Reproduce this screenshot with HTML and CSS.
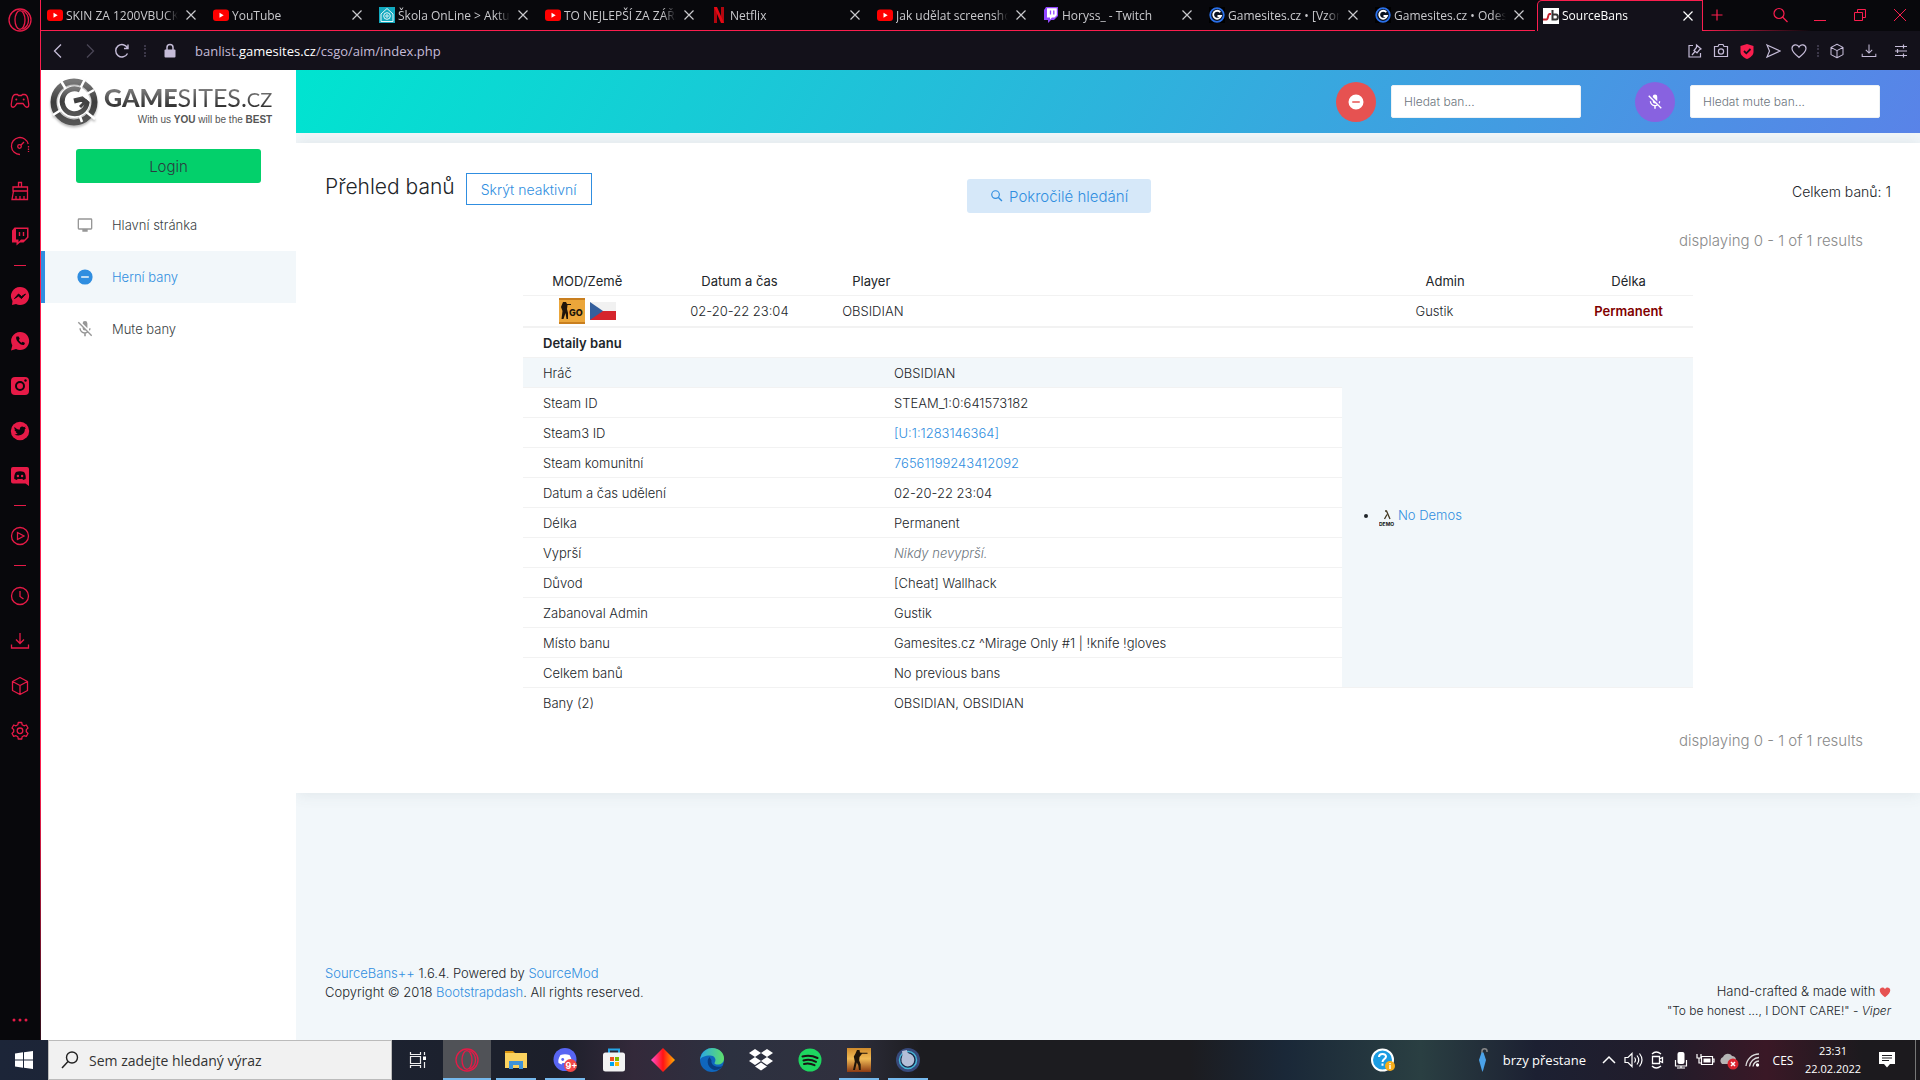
FILE: index.html
```html
<!DOCTYPE html>
<html lang="cs">
<head>
<meta charset="utf-8">
<title>SourceBans</title>
<link rel="stylesheet" href="styles.css">
</head>
<body>
<svg class="defs" aria-hidden="true">
  <defs>
    <linearGradient id="steel" x1="0" y1="0" x2="0" y2="1"><stop offset="0" stop-color="#777"/><stop offset=".5" stop-color="#3c3c3c"/><stop offset="1" stop-color="#555"/></linearGradient>
    <linearGradient id="edge1" x1="0" y1="0" x2="1" y2="0"><stop offset="0" stop-color="#2aa7e4"/><stop offset="1" stop-color="#5fe06a"/></linearGradient>
    <linearGradient id="diamond" x1="0" y1="0" x2="1" y2="0"><stop offset="0" stop-color="#ff4fd0"/><stop offset=".5" stop-color="#ff1414"/><stop offset="1" stop-color="#ffb000"/></linearGradient>
    <linearGradient id="gold" x1="0" y1="0" x2="0" y2="1"><stop offset="0" stop-color="#d08a2c"/><stop offset=".45" stop-color="#f1bb55"/><stop offset="1" stop-color="#8c3a12"/></linearGradient>
    <symbol id="i-x" viewBox="0 0 10 10"><path d="M.5.5l9 9M9.500.5l-9 9" fill="none" stroke="currentColor" stroke-width="1.200"/></symbol>
    <symbol id="i-yt" viewBox="0 0 16 16"><rect y="2.500" width="16" height="11.500" rx="3" fill="#f00"/><path d="M6.500 5.700v5l4.200-2.500z" fill="#fff"/></symbol>
    <symbol id="i-gs" viewBox="0 0 16 16"><rect width="16" height="16" fill="#000"/><circle cx="8" cy="8" r="6.800" fill="#0a1220" stroke="#2a6fe8" stroke-width="1.800"/><path d="M11.300 5.200A4 4 0 1 0 12 9H8.500" fill="none" stroke="#fff" stroke-width="1.800"/></symbol>
    <symbol id="i-opera" viewBox="0 0 24 24"><g fill="none" stroke="currentColor" stroke-width="1.300"><circle cx="12" cy="12" r="11"/><ellipse cx="12" cy="12" rx="5" ry="9.300"/><path d="M14.500 2.500c8 4 8 15 0 19"/></g></symbol>
    <symbol id="i-cube" viewBox="0 0 20 20"><path d="M10 1.500l7.500 4v9l-7.500 4-7.500-4v-9zM2.500 5.500l7.500 4 7.500-4M10 9.500v9" fill="none" stroke="currentColor" stroke-width="1.300" stroke-linejoin="round"/></symbol>
    <symbol id="i-dl" viewBox="0 0 20 20"><path d="M10 2v10M6 8.500l4 4 4-4M1.500 13.500v3.500h17v-3.500" fill="none" stroke="currentColor" stroke-width="1.300"/></symbol>
    <symbol id="i-minus" viewBox="0 0 24 24"><path fill="currentColor" d="M12 2a10 10 0 1 0 0 20 10 10 0 0 0 0-20zm5 11H7v-2h10z"/></symbol>
    <symbol id="i-micoff" viewBox="0 0 24 24"><path fill="currentColor" d="M19 11c0 1.190-.34 2.300-.9 3.280l-1.230-1.230c.27-.62.43-1.310.43-2.050H19m-4 .16L9 5.180V5a3 3 0 0 1 3-3 3 3 0 0 1 3 3v6.160M4.270 3L21 19.730 19.730 21l-4.190-4.190c-.77.46-1.630.77-2.540.91V21h-2v-3.280c-3.280-.49-6-3.310-6-6.720h1.700c0 3 2.540 5.100 5.300 5.100.81 0 1.600-.19 2.310-.52l-1.660-1.660L12 14a3 3 0 0 1-3-3v-.72L3 4.270 4.270 3z"/></symbol>
    <symbol id="i-search" viewBox="0 0 24 24"><circle cx="9.500" cy="9.500" r="6.500" fill="none" stroke="currentColor" stroke-width="2"/><path d="M14.500 14.500l6 6" stroke="currentColor" stroke-width="2.400"/></symbol>
  </defs>
</svg>

<div class="browser">
  <nav class="rail" aria-label="Opera">
    <button class="rail-btn rail-opera" aria-label="Menu"><svg class="ic24"><use href="#i-opera"/></svg></button>
    <button class="rail-btn" aria-label="GX Corner"><svg class="ic20" viewBox="0 0 20 20"><path d="M5.500 3.500h2l1 1h3l1-1h2c2 0 3 2 3.500 5l.8 5c.2 3-2.300 3.500-3.800 1.700L13 12.500H7L5 15.200C3.500 17 1 16.500 1.200 13.500l.8-5c.5-3 1.500-5 3.500-5z" fill="none" stroke="currentColor" stroke-width="1.300"/><circle cx="6.300" cy="8.500" r="1" fill="currentColor"/><circle cx="13.700" cy="8.500" r="1" fill="currentColor"/></svg></button>
    <button class="rail-btn" aria-label="GX Control"><svg class="ic20" viewBox="0 0 20 20"><g fill="none" stroke="currentColor" stroke-width="1.300"><path d="M10 18.500A8.500 8.500 0 1 1 18.200 8"/><circle cx="9.500" cy="10.500" r="1.800"/><path d="M10.800 9.200L14 6"/><path d="M18.500 10v6" stroke-dasharray="1.500 1"/></g></svg></button>
    <button class="rail-btn" aria-label="GX Cleaner"><svg class="ic20" viewBox="0 0 20 20"><path d="M8.500 6V1.500h3V6M3 6h14.500v4H3zM3.500 10L2 18.500h15.500V10M6 18v-3M10 18v-3M14 18v-3" fill="none" stroke="currentColor" stroke-width="1.300"/></svg></button>
    <button class="rail-btn" aria-label="Twitch"><svg class="ic20" viewBox="0 0 20 20"><path d="M2 4.500L4.500 1.500H18.500v10l-5 5H10L6.500 19.500v-3H2z" fill="currentColor"/><path d="M6 3h11v8l-2.500 2.500H11L8.500 16v-2.500H6z" fill="#08080c"/><path d="M9.500 6v4M13.500 6v4" stroke="currentColor" stroke-width="1.400"/></svg></button>
    <hr>
    <button class="rail-btn" aria-label="Messenger"><svg class="ic20" viewBox="0 0 20 20"><path d="M10 1a9 9 0 1 1-4 17l-4 1 .5-4A9 9 0 0 1 10 1z" fill="currentColor"/><path d="M4.500 12.500l4-4.500 3 2.500 4-2.500-4 4.500-3-2.500z" fill="#08080c" stroke="#08080c"/></svg></button>
    <button class="rail-btn" aria-label="WhatsApp"><svg class="ic20" viewBox="0 0 20 20"><path d="M10 1a9 9 0 1 1-4 17l-5 1.500 1.300-5A9 9 0 0 1 10 1z" fill="currentColor"/><path d="M6.500 5.500c-2 3 4 9.500 7.500 8.500l1-2-2.300-1.300-1.200 1c-1-.3-2.300-1.700-2.700-2.700l.9-1.200-1-2.300z" fill="#08080c"/></svg></button>
    <button class="rail-btn" aria-label="Instagram"><svg class="ic20" viewBox="0 0 20 20"><rect x="1" y="1" width="18" height="18" rx="4" fill="currentColor"/><circle cx="10" cy="10" r="4" fill="none" stroke="#08080c" stroke-width="2"/><circle cx="15.500" cy="4.500" r="1.200" fill="#08080c"/></svg></button>
    <button class="rail-btn" aria-label="Twitter"><svg class="ic20" viewBox="0 0 20 20"><circle cx="10" cy="10" r="9.200" fill="currentColor"/><path d="M4.500 6c1.500 1.700 3.300 2.500 5.400 2.600-.5-3 2.600-4 4.100-2.400l1.700-.6-.9 1.500 1.200-.2-1.200 1.300c.2 5.500-6 7.700-10.300 5.200 1.300 0 2.400-.3 3.200-1-1.200-.2-1.800-.8-2.100-1.600h1C5 10.300 4.500 9.500 4.500 8.500l1 .2C4.300 7.800 4.100 7 4.500 6z" fill="#08080c"/></svg></button>
    <button class="rail-btn" aria-label="Discord"><svg class="ic20" viewBox="0 0 20 20"><path d="M3 1h14a2 2 0 0 1 2 2v17l-3.500-2.500H3a2 2 0 0 1-2-2V3a2 2 0 0 1 2-2z" fill="currentColor"/><path d="M6 6c2.500-1 5.500-1 8 0 1.500 2 2 4.500 1.700 7l-2.500 1-1-1.300c-1.500.3-3 .3-4.400 0L6.800 14l-2.500-1C4 10.500 4.500 8 6 6z" fill="#08080c"/><circle cx="7.900" cy="10" r="1.200" fill="currentColor"/><circle cx="12.100" cy="10" r="1.200" fill="currentColor"/></svg></button>
    <hr>
    <button class="rail-btn" aria-label="Player"><svg class="ic20" viewBox="0 0 20 20"><circle cx="10" cy="10" r="8.500" fill="none" stroke="currentColor" stroke-width="1.300"/><path d="M7.500 6.500v7l6.500-3.500z" fill="none" stroke="currentColor" stroke-width="1.300"/></svg></button>
    <hr>
    <button class="rail-btn" aria-label="Historie"><svg class="ic20" viewBox="0 0 20 20"><circle cx="10" cy="10" r="8.500" fill="none" stroke="currentColor" stroke-width="1.300"/><path d="M10 5v5.500l3.500 2.500" fill="none" stroke="currentColor" stroke-width="1.300"/></svg></button>
    <button class="rail-btn" aria-label="Stahování"><svg class="ic20"><use href="#i-dl"/></svg></button>
    <button class="rail-btn" aria-label="Rozšíření"><svg class="ic20"><use href="#i-cube"/></svg></button>
    <button class="rail-btn" aria-label="Nastavení"><svg class="ic20" viewBox="0 0 20 20"><path d="M8.300 1.500h3.400l.5 2.300 1.800 1 2.300-.8 1.700 3-1.700 1.600v2.200l1.700 1.700-1.700 2.900-2.300-.7-1.800 1-.5 2.300H8.300l-.5-2.300-1.800-1-2.300.7L2 12.500l1.700-1.700V8.600L2 7l1.700-3 2.300.8 1.800-1z" fill="none" stroke="currentColor" stroke-width="1.300" stroke-linejoin="round"/><circle cx="10" cy="9.800" r="2.800" fill="none" stroke="currentColor" stroke-width="1.300"/></svg></button>
    <button class="rail-btn rail-more" aria-label="Více"><svg class="ic20" viewBox="0 0 20 20"><g fill="currentColor"><circle cx="4" cy="10" r="1.500"/><circle cx="10" cy="10" r="1.500"/><circle cx="16" cy="10" r="1.500"/></g></svg></button>
  </nav>

  <div class="window">
    <div class="tabs">
      <div class="tab"><svg class="ic16"><use href="#i-yt"/></svg><span>SKIN ZA 1200VBUCKS</span><button aria-label="Zavřít"><svg><use href="#i-x"/></svg></button></div>
      <div class="tab"><svg class="ic16"><use href="#i-yt"/></svg><span>YouTube</span><button aria-label="Zavřít"><svg><use href="#i-x"/></svg></button></div>
      <div class="tab"><svg class="ic16" viewBox="0 0 16 16"><rect width="16" height="16" fill="#12a9bf"/><path d="M2 7l6-5.500L14 7v7.500H2z" fill="none" stroke="#e8f8fa"/><circle cx="8" cy="9" r="3.300" fill="none" stroke="#e8f8fa"/><circle cx="8" cy="9" r="1.200" fill="none" stroke="#e8f8fa"/></svg><span>Škola OnLine &gt; Aktua</span><button aria-label="Zavřít"><svg><use href="#i-x"/></svg></button></div>
      <div class="tab"><svg class="ic16"><use href="#i-yt"/></svg><span>TO NEJLEPŠÍ ZA ZÁŘÍ</span><button aria-label="Zavřít"><svg><use href="#i-x"/></svg></button></div>
      <div class="tab"><svg class="ic16" viewBox="0 0 16 16"><path d="M3 0h3v16H3zM10 0h3v16h-3z" fill="#b1060f"/><path d="M3 0h3l7 16h-3z" fill="#e50914"/></svg><span>Netflix</span><button aria-label="Zavřít"><svg><use href="#i-x"/></svg></button></div>
      <div class="tab"><svg class="ic16"><use href="#i-yt"/></svg><span>Jak udělat screenshot</span><button aria-label="Zavřít"><svg><use href="#i-x"/></svg></button></div>
      <div class="tab"><svg class="ic16" viewBox="0 0 16 16"><path d="M1 3l2-3h12v9l-4 4H8l-3 3v-3H1z" fill="#9146ff"/><path d="M4 1.200h9.800v7L11.500 10.500H9L7 12.500v-2H4z" fill="#fff"/><path d="M7.500 3.500v4M10.800 3.500v4" stroke="#9146ff" stroke-width="1.300"/></svg><span>Horyss_ - Twitch</span><button aria-label="Zavřít"><svg><use href="#i-x"/></svg></button></div>
      <div class="tab"><svg class="ic16"><use href="#i-gs"/></svg><span>Gamesites.cz • [Vzor]</span><button aria-label="Zavřít"><svg><use href="#i-x"/></svg></button></div>
      <div class="tab"><svg class="ic16"><use href="#i-gs"/></svg><span>Gamesites.cz • Odesla</span><button aria-label="Zavřít"><svg><use href="#i-x"/></svg></button></div>
      <div class="tab active"><svg class="ic16" viewBox="0 0 16 16"><rect width="16" height="16" fill="#fff"/><path d="M0 11.500h3.500c2 0 1-5 3-5.500H8" fill="none" stroke="#c8202c" stroke-width="2"/><path d="M9.500 2v9.500H13c2.500 0 2.500-5 0-5H9" fill="none" stroke="#333" stroke-width="2"/></svg><span>SourceBans</span><button aria-label="Zavřít"><svg><use href="#i-x"/></svg></button></div>
      <div class="tabs-rest">
        <button aria-label="Nová karta"><svg class="ic16" viewBox="0 0 16 16"><path d="M8 2.500v11M2.500 8h11" stroke="currentColor" stroke-width="1.200"/></svg></button>
        <div class="win-controls">
          <button aria-label="Hledat"><svg class="ic16" viewBox="0 0 16 16"><circle cx="7" cy="6.500" r="5" fill="none" stroke="currentColor" stroke-width="1.200"/><path d="M10.500 10l5 5" stroke="currentColor" stroke-width="1.200"/></svg></button>
          <button aria-label="Minimalizovat"><svg class="ic16" viewBox="0 0 16 16"><path d="M2 13.500h12" stroke="currentColor"/></svg></button>
          <button aria-label="Obnovit"><svg class="ic16" viewBox="0 0 16 16"><path d="M2.500 5.500h8v8h-8zM5.500 5.500v-3h8v8h-3" fill="none" stroke="currentColor"/></svg></button>
          <button aria-label="Zavřít okno"><svg class="ic16" viewBox="0 0 16 16"><path d="M2 2l12 12M14 2L2 14" stroke="currentColor"/></svg></button>
        </div>
      </div>
    </div>

    <div class="toolbar">
      <button aria-label="Zpět"><svg class="ic16" viewBox="0 0 16 16"><path d="M11 1.500L4.500 8l6.500 6.500" fill="none" stroke="currentColor" stroke-width="1.300"/></svg></button>
      <button class="off" aria-label="Vpřed"><svg class="ic16" viewBox="0 0 16 16"><path d="M5 1.500L11.500 8 5 14.500" fill="none" stroke="currentColor" stroke-width="1.300"/></svg></button>
      <button aria-label="Obnovit stránku"><svg class="ic16" viewBox="0 0 16 16"><path d="M13.500 10.500A6.200 6.200 0 1 1 13.500 5M14 1.500V5.500h-4" fill="none" stroke="currentColor" stroke-width="1.400"/></svg></button>
      <i class="dots"></i>
      <svg class="ic16 lock" viewBox="0 0 16 16"><rect x="2.500" y="6.500" width="11" height="8" rx="1" fill="currentColor"/><path d="M5 7V4.500a3 3 0 0 1 6 0V7" fill="none" stroke="currentColor" stroke-width="1.500"/></svg>
      <span class="url">banlist.<b>gamesites.cz</b>/csgo/aim/index.php</span>
      <div class="tools">
        <svg class="ic16" viewBox="0 0 16 16"><path d="M6 2.500H2v11.500h11.500V10M9.500 2l4.500 4-1.500.8-2.500 3L7 7.500l2.500-3zM8 8.500l-3 3.500" fill="none" stroke="currentColor" stroke-width="1.200"/></svg>
        <svg class="ic16" viewBox="0 0 16 16"><path d="M1.500 3.500h3.500l1-2h4l1 2h3.500v10h-13z" fill="none" stroke="currentColor" stroke-width="1.200"/><circle cx="8" cy="8.500" r="2.600" fill="none" stroke="currentColor" stroke-width="1.200"/></svg>
        <svg class="ic16 shield" viewBox="0 0 16 16"><path d="M8 1l6.500 2v6c0 3-3 5.500-6.500 7-3.500-1.500-6.500-4-6.500-7V3z" fill="currentColor"/><path d="M5 8l2.300 2.300L11.500 6" fill="none" stroke="#13111a" stroke-width="1.800"/></svg>
        <svg class="ic16" viewBox="0 0 16 16"><path d="M2 2l13 6-13 6 2.500-6z" fill="none" stroke="currentColor" stroke-width="1.200"/></svg>
        <svg class="ic16" viewBox="0 0 16 16"><path d="M8 14.500C3 10.500 1 8 1 5.500c0-4 5.500-5 7-1.500 1.500-3.500 7-2.500 7 1.500 0 2.500-2 5-7 9z" fill="none" stroke="currentColor" stroke-width="1.200"/></svg>
        <i class="dots"></i>
        <svg class="ic16"><use href="#i-cube"/></svg>
        <svg class="ic16 wide"><use href="#i-dl"/></svg>
        <svg class="ic16 wide" viewBox="0 0 16 16"><path d="M2 3.500h12M2 8h12M2 12.500h12M10.500 1.500v4M4.500 6v4M10.500 10.500v4" stroke="currentColor" stroke-width="1.200"/></svg>
      </div>
    </div>

    <div class="site">
      <aside class="sidebar">
        <a class="logo" href="#">
          <svg viewBox="0 0 50 50"><circle cx="25" cy="25" r="20.500" fill="none" stroke="url(#steel)" stroke-width="6"/><path d="M12 4l6 10M36 2l-6 12M4 38l11-7M36 34l10 8M33 45l-3-8M45 13l-9 5" stroke="#fff" stroke-width="2.500"/><circle cx="25" cy="25" r="16" fill="#fff"/><path d="M31 13A12.500 12.500 0 1 0 38 26l-5-4-8 2" fill="none" stroke="url(#steel)" stroke-width="5"/><path d="M31 30l7-7" stroke="#444" stroke-width="3"/></svg>
          <span class="logo-text"><span class="logo-name"><b>GAME</b>SITES.<small>CZ</small></span><span class="logo-tag">With us <b>YOU</b> will be the <b>BEST</b></span></span>
        </a>
        <button class="login">Login</button>
        <nav class="menu">
          <a href="#"><svg class="ic16" viewBox="0 0 24 24"><path fill="currentColor" d="M21 2H3a2 2 0 0 0-2 2v13a2 2 0 0 0 2 2h5v3h8v-3h5a2 2 0 0 0 2-2V4a2 2 0 0 0-2-2zm0 15H3V4h18z"/></svg>Hlavní stránka</a>
          <a href="#" class="current"><svg class="ic16" viewBox="1.500 1.500 21 21"><use href="#i-minus" width="24" height="24"/></svg>Herní bany</a>
          <a href="#"><svg class="ic16" viewBox="2 2 20 20"><use href="#i-micoff" width="24" height="24"/></svg>Mute bany</a>
        </nav>
      </aside>

      <div class="main">
        <header class="topbar">
          <form class="find"><button type="button" class="round red" aria-label="Hledat ban"><svg class="ic18"><use href="#i-minus"/></svg></button><input type="text" placeholder="Hledat ban..." aria-label="Hledat ban"></form>
          <form class="find"><button type="button" class="round violet" aria-label="Hledat mute ban"><svg class="ic18"><use href="#i-micoff"/></svg></button><input type="text" placeholder="Hledat mute ban..." aria-label="Hledat mute ban"></form>
        </header>

        <section class="card">
          <div class="card-head">
            <div class="card-title"><h1>Přehled banů</h1><button class="outline">Skrýt neaktivní</button></div>
            <button class="advanced"><svg class="ic14"><use href="#i-search"/></svg>Pokročilé hledání</button>
            <p class="total">Celkem banů: 1</p>
          </div>
          <p class="paging">displaying 0 - 1 of 1 results</p>
          <div class="tables">
            <table class="bans">
              <colgroup><col class="c-mod"><col class="c-date"><col class="c-player"><col class="c-admin"><col class="c-len"></colgroup>
              <thead><tr><th>MOD/Země</th><th>Datum a čas</th><th class="left">Player</th><th class="left">Admin</th><th>Délka</th></tr></thead>
              <tbody><tr>
                <td><span class="flags"><svg width="26" height="26" viewBox="0 0 26 26"><rect width="26" height="26" fill="#eba63a"/><path d="M0 0h26v2H0zM0 24h26v2H0z" fill="#c97f1f"/><path d="M4 4h3l1 2h4v1H8.500L8 11l1 4v6H7.500l-1-6-2 6H2.500l1-8-1.500-4z" fill="#20150a"/><text x="10" y="18" class="go">GO</text></svg><svg width="26" height="18" viewBox="0 0 26 18"><rect width="26" height="18" fill="#f1f1f1"/><path d="M0 9h26v9H0z" fill="#d5242c"/><path d="M0 0l13 9-13 9z" fill="#345f9c"/></svg></span></td>
                <td>02-20-22 23:04</td><td class="left">OBSIDIAN</td><td class="left">Gustik</td><td class="perm">Permanent</td>
              </tr></tbody>
            </table>
            <table class="details">
              <colgroup><col class="d-name"><col class="d-value"><col class="d-side"></colgroup>
              <tbody>
                <tr><th colspan="3">Detaily banu</th></tr>
                <tr class="tint"><td>Hráč</td><td>OBSIDIAN</td><td rowspan="11" class="side"><ul><li><svg width="16" height="16" viewBox="0 0 16 16"><path d="M6 1h1.500l3.500 8M8 4.500L5.500 9" fill="none" stroke="#443a22" stroke-width="1.300"/><text x="0" y="16" class="demo">DEMO</text></svg><a href="#">No Demos</a></li></ul></td></tr>
                <tr><td>Steam ID</td><td>STEAM_1:0:641573182</td></tr>
                <tr><td>Steam3 ID</td><td><a href="#">[U:1:1283146364]</a></td></tr>
                <tr><td>Steam komunitní</td><td><a href="#">76561199243412092</a></td></tr>
                <tr><td>Datum a čas udělení</td><td>02-20-22 23:04</td></tr>
                <tr><td>Délka</td><td>Permanent</td></tr>
                <tr><td>Vyprší</td><td><em>Nikdy nevyprší.</em></td></tr>
                <tr><td>Důvod</td><td>[Cheat] Wallhack</td></tr>
                <tr><td>Zabanoval Admin</td><td>Gustik</td></tr>
                <tr><td>Místo banu</td><td>Gamesites.cz ^Mirage Only #1 | !knife !gloves</td></tr>
                <tr><td>Celkem banů</td><td>No previous bans</td></tr>
                <tr><td>Bany (2)</td><td>OBSIDIAN, OBSIDIAN</td><td></td></tr>
              </tbody>
            </table>
          </div>
          <p class="paging">displaying 0 - 1 of 1 results</p>
        </section>

        <footer class="footer">
          <div><p><a href="#">SourceBans++</a> 1.6.4. Powered by <a href="#">SourceMod</a></p><p>Copyright © 2018 <a href="#">Bootstrapdash</a>. All rights reserved.</p></div>
          <div class="credits"><p>Hand-crafted &amp; made with <svg width="12" height="12" viewBox="0 0 16 16"><path d="M8 15C3 10.800 1 8.500 1 5.500c0-4 5.500-5 7-1.500 1.500-3.500 7-2.500 7 1.500 0 3-2 5.300-7 9.500z" fill="#e65251"/></svg></p><p class="quote">"To be honest ..., I DONT CARE!" - <i>Viper</i></p></div>
        </footer>
      </div>
    </div>
  </div>
</div>

<div class="taskbar">
  <button class="start" aria-label="Start"><svg width="18" height="18" viewBox="0 0 18 18"><path d="M0 2.500l8-1.200v7.200H0zM9 1.200L18 0v8.500H9zM0 9.500h8v7.200l-8-1.200zM9 9.500h9V18l-9-1.300z" fill="#fff"/></svg></button>
  <label class="search"><svg class="ic18" viewBox="0 0 18 18"><circle cx="11" cy="6.500" r="5.500" fill="none" stroke="#222" stroke-width="1.400"/><path d="M7 10.500l-6 6.500" stroke="#222" stroke-width="1.500"/></svg><input type="text" placeholder="Sem zadejte hledaný výraz"></label>
  <div class="apps">
    <button class="task-view" aria-label="Zobrazení úkolů"><svg width="18" height="18" viewBox="0 0 18 18"><path d="M1.500 5.500h10v7h-10zM1.500 1v2.500h10V1M1.500 17v-2.500h10V17M15.500 1v3M15.500 11v6" fill="none" stroke="#eee" stroke-width="1.200"/><rect x="14" y="5.500" width="3" height="3.500" fill="#fff"/></svg></button>
    <button class="run lit" aria-label="Opera GX"><svg class="ic24 opera"><use href="#i-opera"/></svg></button>
    <button class="run" aria-label="Průzkumník"><svg class="ic24" viewBox="0 0 24 24"><path d="M1 3h8l2 2v4H1z" fill="#d9930f"/><path d="M1 5h22v15H1z" fill="#fbd25e"/><path d="M5 13h14v8h-4v-4H9v4H5z" fill="#3f93d8"/></svg></button>
    <button class="run" aria-label="Discord"><svg class="ic24" viewBox="0 0 24 24"><circle cx="12" cy="11.500" r="11.500" fill="#5865f2"/><path d="M7.500 7c3-1 6-1 9 0 2 3 2.500 5.500 2 8l-3 1.500-1-1.500h-5l-1 1.500-3-1.500c-.5-2.500 0-5 2-8z" fill="#fff"/><circle cx="9.700" cy="11.500" r="1.400" fill="#5865f2"/><circle cx="17.500" cy="17.500" r="6.500" fill="#f04747"/><text x="12.500" y="21" class="badge">9+</text></svg></button>
    <button aria-label="Microsoft Store"><svg class="ic24" viewBox="0 0 24 24"><path d="M7 6V1.500h10V6" fill="none" stroke="#25a5e8" stroke-width="2"/><rect x="1" y="4.500" width="22" height="19" rx="2.500" fill="#f3f3f3"/><path d="M8 9h4v4H8z" fill="#f25022"/><path d="M13 9h4v4h-4z" fill="#7fba00"/><path d="M8 14h4v4H8z" fill="#00a4ef"/><path d="M13 14h4v4h-4z" fill="#ffb900"/></svg></button>
    <button aria-label="AMD"><svg class="ic24" viewBox="0 0 24 24"><path d="M12 0l12 12-12 12L0 12z" fill="url(#diamond)"/></svg></button>
    <button aria-label="Edge"><svg class="ic24" viewBox="0 0 24 24"><circle cx="12" cy="12" r="12" fill="#0f66bd"/><path d="M0 12C1 3 8 0 12 0c8 0 12 5.500 12 10.500 0 4-3 6-6.500 6-3 0-3.500-1-2.500-2.500 1.500-3-.5-6.500-5-6.500C5 7.500 1 9 0 12z" fill="url(#edge1)"/><path d="M9.500 9c-4 4-1 12 5 13 4 0 7-2 8-4-6 2.500-12-1-11-5.500z" fill="#083d82"/></svg></button>
    <button aria-label="Dropbox"><svg class="ic24" viewBox="0 0 24 24"><path d="M6 1l6 4-6 4-6-4zM18 1l6 4-6 4-6-4zM6 9l6 4-6 4-6-4zM18 9l6 4-6 4-6-4zM12 14.500l6 4-6 4-6-4z" fill="#fff"/></svg></button>
    <button aria-label="Spotify"><svg class="ic24" viewBox="0 0 24 24"><circle cx="12" cy="12" r="11.500" fill="#1ed760"/><path d="M4.500 8.500c5-1.500 10-1 15 1.500M5.500 12.500c4-1.200 8.500-.8 12.500 1.300M6 16c3.500-.8 7-.5 10.500 1.200" fill="none" stroke="#191414" stroke-width="2" stroke-linecap="round"/></svg></button>
    <button class="run" aria-label="Counter-Strike"><svg class="ic24" viewBox="0 0 24 24"><rect width="24" height="24" fill="url(#gold)"/><path d="M10 2h2.500l.5 2.500 2 .3h5.500v1H15l-1.500 2-1 1.200-.3 3.500 1.500 4V22h-1.700l-.7-4.500-1.500-3L8 22H6l1.800-8.500-1-5 1.700-3z" fill="#20150a"/></svg></button>
    <button class="run" aria-label="Aplikace"><svg class="ic24" viewBox="0 0 24 24"><circle cx="12" cy="12" r="12" fill="#374a7c"/><circle cx="12" cy="12" r="8.500" fill="#172848" stroke="#48b7d8" stroke-width="1.500"/><path d="M11 2c0 3 1 3 3.500 4A6.500 6.500 0 1 1 6 9c1-3 0-4 0-6z" fill="#b4bfd8"/></svg></button>
  </div>
  <div class="tray">
    <svg class="help" width="24" height="24" viewBox="0 0 24 24"><circle cx="11.500" cy="12" r="10.500" fill="#1b9ce2" stroke="#fff" stroke-width="2"/><path d="M8 9c0-4 7-4 7-.5 0 2.500-3.500 2.500-3.500 5.500M11.500 15.500v2.300" fill="none" stroke="#fff" stroke-width="2"/><circle cx="19" cy="18" r="5" fill="#f6ae1c"/><path d="M19 15v1.200M19 17v4" stroke="#fff" stroke-width="1.500"/></svg>
    <svg class="weather" width="18" height="24" viewBox="0 0 18 24"><path d="M8 5V3c0-3 5-3 5 0v1" fill="none" stroke="#888" stroke-width="1.500"/><path d="M7.500 4.500h2L12 12l-2.500 9-1 3-1-3L5 12z" fill="#4ba3ea"/></svg>
    <span class="forecast">brzy přestane</span>
    <svg viewBox="0 0 24 24"><path d="M6 15l6-6 6 6" fill="none" stroke="#fff" stroke-width="1.500"/></svg>
    <svg viewBox="0 0 24 24"><path d="M4 9.500h3l4-4v13l-4-4H4zM13.500 9.500q2 2.500 0 5M16 7.500q3.500 4.500 0 9M18.500 5.500q5 6.500 0 13" fill="none" stroke="#fff" stroke-width="1.200"/></svg>
    <svg viewBox="0 0 24 24"><path d="M7.500 8.500h7v7h-7zM14.500 11l3-1.500v5l-3-1.500M7 6q4-4 9 0M7 18q4 4 9 0" fill="none" stroke="#fff" stroke-width="1.300"/></svg>
    <svg viewBox="0 0 24 24"><rect x="8.500" y="4" width="7" height="12" rx="2" fill="#fff"/><path d="M6.500 12v6h11v-6M12 18v2M8 20h8" fill="none" stroke="#fff" stroke-width="1.200"/></svg>
    <svg viewBox="0 0 24 24"><path d="M8.500 8.500h11v8h-11zM19.500 11h1.500v3h-1.500" fill="none" stroke="#fff" stroke-width="1.200"/><path d="M10.500 10.500h7v4h-7z" fill="#fff"/><path d="M4 6v4h4V6M6 10v5h3" fill="none" stroke="#fff" stroke-width="1.200"/></svg>
    <svg viewBox="0 0 24 24"><path d="M5 16a4 4 0 0 1 1-7c2-4 7-4 9-1 4 0 5 4 3 8z" fill="#b5b5b5"/><circle cx="16" cy="16" r="5.500" fill="#d9242f"/><path d="M14 14l4 4M18 14l-4 4" stroke="#fff" stroke-width="1.500"/></svg>
    <svg viewBox="0 0 24 24"><path d="M5 18A13 13 0 0 1 18 6M8.500 18.500A10 10 0 0 1 18 9.500M12 18.500a6.500 6.500 0 0 1 6-5.500" fill="none" stroke="#ddd" stroke-width="1.300"/><circle cx="16.500" cy="17" r="1.700" fill="#fff"/></svg>
    <span class="lang">CES</span>
    <span class="clock">23:31<br>22.02.2022</span>
    <button class="notify" aria-label="Oznámení"><svg width="16" height="18" viewBox="0 0 16 18"><path d="M0 1h16v12h-5l-3 3.500L5 13H0z" fill="#fff"/><path d="M3 4.500h10M3 7h10M3 9.500h7" stroke="#1c1c20" stroke-width="1.200"/></svg></button>
    <i class="desk"></i>
  </div>
</div>
</body>
</html>
```
FILE: styles.css
```css
* { box-sizing: border-box; }
body { margin: 0; min-height: 100vh; display: flex; flex-direction: column; background: #08080c; font-family: Inter, "Open Sans", sans-serif; font-size: 13px; font-weight: 300; color: #212529; }
button { border: 0; padding: 0; background: none; color: inherit; font: inherit; display: flex; align-items: center; justify-content: center; }
input { font: inherit; min-width: 0; }
p, h1, ul { margin: 0; }
svg { flex: none; display: block; }
a { color: #308ee0; text-decoration: none; }
.defs { position: absolute; width: 0; height: 0; }
.ic14 { width: 14px; height: 14px; }
.ic16 { width: 16px; height: 16px; }
.ic18 { width: 18px; height: 18px; }
.ic20 { width: 20px; height: 20px; }
.ic24 { width: 24px; height: 24px; }

/* Browser frame */
.browser { flex: 1; display: flex; }
.rail { width: 41px; flex: none; display: flex; flex-direction: column; color: #e61a47; border-right: 1px solid; border-image: linear-gradient(#fa1e4e 75%, #30101c) 1; }
.rail-btn { height: 45px; }
.rail-opera { height: 40px; margin-bottom: 38px; }
.rail-more { margin-top: auto; height: 40px; }
.rail hr { width: 12px; height: 1px; margin: 7px auto; border: 0; background: #e61a47; }
.window { flex: 1; min-width: 0; display: flex; flex-direction: column; font-family: "Open Sans", "Noto Sans", sans-serif; font-weight: 400; }
.tabs { height: 31px; display: flex; font-size: 12px; color: #c9c9cd; }
.tab { flex: 0 1 166px; min-width: 0; display: flex; align-items: center; gap: 3px; padding: 0 11px 0 6px; border-bottom: 1px solid #fa1e4e; }
.tab span { flex: 1; min-width: 0; overflow: hidden; white-space: nowrap; mask-image: linear-gradient(90deg, #000 88%, transparent); }
.tab button { margin-left: 5px; }
.tab button svg { width: 10px; height: 10px; }
.tab.active { margin-left: 2px; color: #fff; background: #13111a; border: 1px solid #fa1e4e; border-bottom: 0; border-top-left-radius: 5px; padding: 0 9px 1px 5px; }
.tabs-rest { flex: 1; display: flex; justify-content: space-between; align-items: center; padding: 0 12px 0 6px; color: #fa1e4e; border-bottom: 1px solid; border-image: linear-gradient(90deg, #fa1e4e, transparent 50%) 1; }
.win-controls { display: flex; gap: 24px; }
.toolbar { height: 39px; display: flex; align-items: center; gap: 16px; padding: 0 11px 0 9px; background: #13111a; color: #c5bcd8; }
.toolbar .off { color: #4a4656; }
.dots { height: 12px; border-left: 2px dotted #3b3748; }
.toolbar > .dots { margin: 0 -2px; }
.lock { margin-left: 2px; }
.url { flex: 1; font-size: 13px; margin-left: 1px; }
.url b { font-weight: 400; color: #fff; }
.tools { display: flex; align-items: center; gap: 10px; }
.tools .shield { color: #fa1e4e; }
.tools .wide { margin-left: 6px; }

/* Page */
.site { flex: 1; display: flex; background: #f2f7fa; font-family: Inter, "Open Sans", sans-serif; font-weight: 300; }
.sidebar { width: 255px; flex: none; background: #fff; display: flex; flex-direction: column; }
.logo { display: flex; align-items: flex-start; gap: 5px; padding: 7px 8px 0; height: 79px; color: #444; }
.logo > svg { width: 50px; height: 50px; filter: drop-shadow(0 2px 1px #bbb); }
.logo-text { display: flex; flex-direction: column; align-items: flex-end; }
.logo-name { font-family: Lato, sans-serif; font-size: 25px; line-height: 30px; padding-top: 5px; font-weight: 400; background: linear-gradient(#888 25%, #333 80%); background-clip: text; color: transparent; }
.logo-name b { font-weight: 900; }
.logo-name small { font-size: 20px; }
.logo-tag { font: 10px/12px "Liberation Sans", sans-serif; color: #555; }
.login { margin: 0 35px; height: 34px; border-radius: 3px; background: #03d06b; color: #2b3a40; font-size: 15px; }
.menu { margin-top: 16px; }
.menu a { display: flex; align-items: center; gap: 19px; height: 52px; padding-left: 32px; border-left: 4px solid transparent; color: #3a3f44; font-size: 13px; }
.menu svg { color: #979797; }
.menu .current { background: #f2f7fa; border-color: #308ee0; color: #308ee0; }
.menu .current svg { color: #308ee0; }
.main { flex: 1; min-width: 0; display: flex; flex-direction: column; }
.topbar { height: 63px; display: flex; justify-content: flex-end; align-items: center; gap: 54px; padding-right: 40px; background: linear-gradient(120deg, #00e4d0, #5983e8); }
.find { display: flex; align-items: center; gap: 15px; }
.find input { width: 190px; height: 33px; padding: 0 12px; border: 1px solid #eef2f5; border-radius: 2px; font-size: 12px; background: #fff; }
.find input::placeholder { color: #6c757d; }
.round { width: 40px; height: 40px; border-radius: 50%; color: #fff; }
.red { background: #e65251; }
.violet { background: #8862e0; }
.card { margin-top: 10px; padding: 30px 29px 32px; background: #fff; box-shadow: 0 0 16px rgba(70, 90, 100, .12); clip-path: inset(-10px 0 -20px 0); }
.card-head { display: grid; grid-template-columns: 41% auto 1fr; height: 48px; }
.card-title { display: flex; align-items: flex-start; gap: 11px; }
h1 { font-size: 21px; line-height: 28px; font-weight: 300; }
.outline { height: 32px; padding: 0 14px; border: 1px solid #308ee0; color: #308ee0; font-size: 14px; }
.advanced { align-self: start; margin-top: 6px; height: 34px; padding: 0 23px; gap: 5px; border-radius: 3px; background: #d6e8f9; color: #308ee0; font-size: 15px; }
.total { text-align: right; font-size: 14px; line-height: 38px; }
.paging { padding: 10px 28px; text-align: right; font-size: 15px; line-height: 20px; color: #8a8a8a; }
.tables { width: 1170px; max-width: 100%; margin: 5px auto 3px; }
table { width: 100%; table-layout: fixed; border-collapse: separate; border-spacing: 0; line-height: 18px; }
td, th { height: 30px; padding: 0 15px; border-bottom: 1px solid #f2f2f2; text-align: center; }
.bans th { font-weight: 400; padding: 0 25px; white-space: nowrap; }
.bans td { height: 32px; border-bottom-width: 2px; white-space: nowrap; }
.bans .left { text-align: left; }
.c-mod { width: 11%; }
.c-date { width: 15%; }
.c-player { width: 49%; }
.c-admin { width: 14%; }
.c-len { width: 11%; }
.bans .perm { color: #800000; font-weight: 600; }
.flags { display: flex; justify-content: center; align-items: center; gap: 5px; }
.go { font: 800 9px Inter, sans-serif; fill: #20150a; }
.demo { font: 700 5px Inter, sans-serif; fill: #111; }
.d-name { width: 30%; }
.d-value { width: 40%; }
.d-side { width: 30%; }
.details td, .details th { text-align: left; padding: 0 20px; }
.details th { font-weight: 600; }
.details .tint td { background: #f2f7fa; }
.details tr:last-child td { border: 0; }
.details em { color: #6c757d; }
.side ul { padding-left: 17px; margin-bottom: 14px; }
.side svg { display: inline-block; vertical-align: -6px; margin-right: 3px; }
.footer { margin-top: auto; display: flex; justify-content: space-between; padding: 0 29px 20px; font-size: 13px; line-height: 19px; }
.credits { text-align: right; padding-top: 18px; }
.credits svg { display: inline-block; vertical-align: -2px; }
.quote { font-size: 12px; }

/* Taskbar */
.taskbar { height: 40px; flex: none; display: flex; color: #fff; font-family: "Open Sans", "Noto Sans", sans-serif; font-weight: 400; background: linear-gradient(90deg, #1c2538 0, #1c2230 20%, #1c1f2a 29%, #33293a 33%, #2c3140 38%, #30303e 44%, #1c1c20 48%, #1c1c20 62%, #1a2838 67%, #2a3f42 74%, #1c2032 80%, #221c2a 87%, #3a1826 92%, #1c1a1e 97%); }
.start { width: 48px; }
.search { width: 344px; display: flex; align-items: center; gap: 10px; padding-left: 12px; background: #f1f1f1; border: 1px solid #bbb; }
.search input { flex: 1; border: 0; padding: 0; background: none; font-size: 14px; }
.search input::placeholder { color: #333; }
.apps { display: flex; gap: 1px; padding-left: 2px; }
.apps button { width: 48px; height: 40px; background: no-repeat center bottom / 40px 2px; }
.apps .run { background-image: linear-gradient(#76b9ed, #76b9ed); }
.apps .lit { background-color: #505257; background-size: 48px 2px; }
.opera { color: #e61a47; }
.badge { font: 700 9px Inter, sans-serif; fill: #fff; }
.tray { margin-left: auto; display: flex; align-items: center; font-size: 13px; }
.tray > svg { width: 24px; height: 24px; }
.tray .help { margin-right: 79px; }
.tray .weather { width: 18px; }
.forecast { padding: 0 11px; }
.lang { width: 36px; text-align: center; font-size: 12px; }
.clock { width: 64px; text-align: center; font-size: 11px; line-height: 18px; }
.notify { width: 44px; height: 40px; }
.desk { height: 40px; margin: 0 4px 0 6px; border-left: 1px solid #777; }
```
